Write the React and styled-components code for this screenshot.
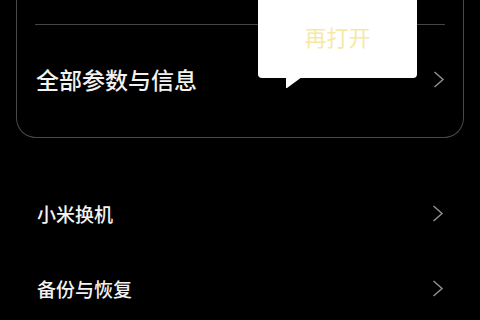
import React from "react";
import styled, { createGlobalStyle } from "styled-components";

const Global = createGlobalStyle`
  html, body { margin: 0; padding: 0; background: #000; }
  body { font-family: "Noto Sans CJK SC", "Noto Sans", sans-serif; overflow: hidden; }
`;

const Page = styled.div`
  position: relative;
  width: 480px;
  height: 320px;
  background: #000;
  display: flex;
  flex-direction: column;
`;

const Card = styled.section`
  margin: 0 16px;
  border: 1px solid #4a4a4a;
  border-top: none;
  border-radius: 0 0 20px 20px;
  padding: 24px 18px 0;
  display: flex;
  flex-direction: column;
`;

const Divider = styled.div`
  height: 1px;
  background: #454545;
`;

const Row = styled.div`
  height: ${(p) => p.$h}px;
  padding-bottom: ${(p) => p.$pb || 0}px;
  box-sizing: border-box;
  display: flex;
  align-items: center;
  justify-content: space-between;
  color: #f2f2f2;
  font-size: ${(p) => p.$fs}px;
  font-weight: 500;
  line-height: 1;
`;

const Label = styled.span`
  margin-left: 1px;
`;

const List = styled.div`
  margin-top: 38px;
  padding: 0 36px;
  display: flex;
  flex-direction: column;
`;

const Tooltip = styled.div`
  position: absolute;
  left: 258px;
  top: -6px;
  width: 159px;
  height: 84px;
  box-sizing: border-box;
  background: #fff;
  border-radius: 4px;
  display: flex;
  align-items: center;
  justify-content: center;
  color: #f6e9a4;
  font-size: 22px;
  line-height: 1;
`;

const Tail = styled.div`
  position: absolute;
  left: 28px;
  top: 83px;
  width: 16px;
  height: 11px;
  background: #fff;
  clip-path: polygon(0 0, 100% 0, 1px 100%, 0 100%);
`;

const Chevron = ({ color = "#8e8e8e" }) => (
  <svg width="12" height="17" viewBox="0 0 12 17" fill="none">
    <polyline points="1.5,1 10,8.5 1.5,16" stroke={color} strokeWidth="1.5" strokeLinejoin="miter" />
  </svg>
);

export default function App() {
  return (
    <>
      <Global />
      <Page>
        <Card>
          <Divider />
          <Row $h={112} $pb={3} $fs={23}>
            <Label>全部参数与信息</Label>
            <Chevron />
          </Row>
        </Card>
        <List>
          <Row $h={75} $fs={19}>
            <Label>小米换机</Label>
            <Chevron />
          </Row>
          <Row $h={75} $fs={19}>
            <Label>备份与恢复</Label>
            <Chevron />
          </Row>
        </List>
        <Tooltip>
          再打开
          <Tail />
        </Tooltip>
      </Page>
    </>
  );
}
